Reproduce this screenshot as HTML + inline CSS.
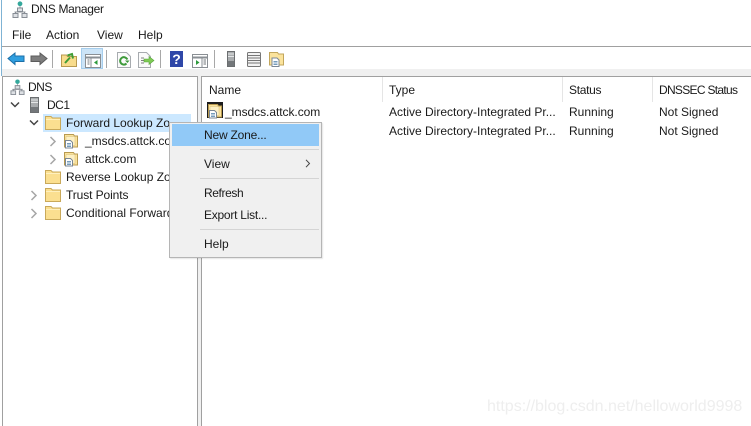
<!DOCTYPE html>
<html><head><meta charset="utf-8">
<style>
html,body{margin:0;padding:0;width:751px;height:426px;overflow:hidden;background:#fff}
body{position:relative;font-family:"Liberation Sans",sans-serif;font-size:12px;color:#1a1a1a}
.a{position:absolute}
.t{position:absolute;white-space:nowrap;line-height:16px;height:16px}
.m{letter-spacing:-.2px}
svg{position:absolute;overflow:visible}
</style></head><body>
<svg width="0" height="0" style="position:absolute">
<defs>
<symbol id="folder" viewBox="0 0 16 15"><path d="M.5 1.500h5.500l1.500 1.500h8v11.500H.5z" fill="#fbdf90" stroke="#c9a95a"/><path d="M1 4.500h14" stroke="#fff0bd"/></symbol>
<symbol id="zone" viewBox="0 0 16 16"><path d="M1.500 1.500h9l1 1.500h3v11h-13z" fill="#fbe39c" stroke="#b89a50"/><path d="M3 3.500h9v9H3z" fill="#fdf0c4" stroke="#d6bd78" stroke-width=".5"/><path d="M2.500 7.500h5l2 2v5.500h-7z" fill="#fff" stroke="#7b8794"/><path d="M4 10.500h4M4 12h4M4 13.500h4" stroke="#4a7ca8" stroke-width=".8"/></symbol>
<symbol id="dns" viewBox="0 0 16 18"><circle cx="8" cy="2.800" r="2.400" fill="#34a89c"/><path d="M8 5.500v5M2.500 11h11" stroke="#8b9097" fill="none"/><path d="M5.500 7h5v3.500h-5zM1 12.500h5v4H1zM10 12.500h5v4h-5z" fill="#dde0e4" stroke="#868c94"/><path d="M3.500 11v1.500M12.500 11v1.500" stroke="#868c94"/></symbol>
</defs></svg>

<div class="a" style="left:1px;top:0;width:1px;height:76px;background:#7fb3d4"></div>

<!-- Title -->
<svg style="left:12px;top:1px" width="16" height="18"><use href="#dns" width="16" height="18"/></svg>
<div class="t" style="left:31px;top:1px;letter-spacing:-.3px">DNS Manager</div>

<!-- Menu -->
<div class="t" style="left:12px;top:27px">File</div>
<div class="t" style="left:46px;top:27px">Action</div>
<div class="t" style="left:97px;top:27px">View</div>
<div class="t" style="left:138px;top:27px">Help</div>
<div class="a" style="left:2px;top:46px;width:749px;height:1px;background:#a0a0a0"></div>

<!-- Toolbar bottom strip -->
<div class="a" style="left:2px;top:69px;width:749px;height:7px;background:#f0f0f0"></div>

<!-- toolbar icons -->
<svg style="left:7px;top:51px" width="18" height="15"><path d="M1 7.500 8 2v3h9v5.500H8V13.500z" fill="#2f9fe0" stroke="#1c6fa8"/></svg>
<svg style="left:30px;top:51px" width="18" height="15"><path d="M17 7.500 10 2v3H1v5.500h9V13.500z" fill="#7d7d7d" stroke="#5c5c5c"/></svg>
<div class="a" style="left:52px;top:50px;width:1px;height:18px;background:#a8a8a8"></div>
<svg style="left:61px;top:52px" width="16" height="15"><path d="M.5 3h5l1 1.500h9v10H.5z" fill="#f8dc8c" stroke="#b89a50"/><path d="M4 11 9 5.500M6.500 3.500 11 2l1 4.500" stroke="#3f9c35" stroke-width="2" fill="none"/></svg>
<div class="a" style="left:81px;top:48px;width:22px;height:21px;background:#cce4f7;box-sizing:border-box;border:1px solid #a5cdec"></div>
<svg style="left:85px;top:54px" width="16" height="14"><rect x=".5" y=".5" width="15" height="13" fill="#fff" stroke="#8a8f94"/><path d="M1 3.500h14" stroke="#8a8f94" stroke-width="2"/><path d="M6 4v9" stroke="#8a8f94"/><path d="M2.500 6h2M2.500 8h2M2.500 10h2" stroke="#6f7478"/><path d="M12.500 6v5L9 8.500z" fill="#2d9a3c"/></svg>
<div class="a" style="left:106px;top:50px;width:1px;height:18px;background:#a8a8a8"></div>
<svg style="left:117px;top:52px" width="14" height="16"><path d="M.5.500h9l4 4v11H.5z" fill="#fbfbfb" stroke="#a7abaf"/><path d="M10.300 7.500A3.700 3.700 0 1 0 9.500 11.500" stroke="#3d9a3a" stroke-width="2" fill="none"/><path d="M8 8.500h4.500L10.500 11z" fill="#3d9a3a"/></svg>
<svg style="left:138px;top:52px" width="17" height="16"><path d="M.5.500h8l4 4v11H.5z" fill="#fbfbfb" stroke="#a7abaf"/><path d="M3 6h3M3 8.500h3M3 11h3" stroke="#7f7f7f"/><path d="M6 7h5V4.500L16 8.500l-5 4V10H6z" fill="#7fcb55" stroke="#58a53c" stroke-width=".6"/></svg>
<div class="a" style="left:160px;top:50px;width:1px;height:18px;background:#a8a8a8"></div>
<div class="a" style="left:170px;top:51px;width:13px;height:16px;background:#2f47a8;color:#fff;font:bold 14px/16px 'Liberation Sans',sans-serif;text-align:center">?</div>
<svg style="left:192px;top:54px" width="16" height="14"><rect x=".5" y=".5" width="15" height="13" fill="#fff" stroke="#8a8f94"/><path d="M1 3.500h14" stroke="#8a8f94" stroke-width="2"/><path d="M10 4v9" stroke="#8a8f94"/><path d="M11.500 6h2.500M11.500 8h2.500M11.500 10h2.500" stroke="#6f7478"/><path d="M4 6v5l3.500-2.500z" fill="#2d9a3c"/></svg>
<div class="a" style="left:214px;top:50px;width:1px;height:18px;background:#a8a8a8"></div>
<svg style="left:227px;top:51px" width="8" height="16"><rect x=".5" y=".5" width="7" height="15" fill="#a9acae" stroke="#6b6e70"/><path d="M1 3h6M1 5.500h6" stroke="#e4e6e7"/><rect x="1" y="10" width="6" height="5" fill="#73777a"/></svg>
<svg style="left:247px;top:52px" width="14" height="15"><rect x=".5" y=".5" width="13" height="14" rx="1" fill="#f2f2f2" stroke="#777"/><path d="M1 3.500h12M1 6h12M1 8.500h12M1 11h12" stroke="#777"/></svg>
<svg style="left:269px;top:51px" width="15" height="16"><path d="M.5 1.500h8l1 1.500h5v11H.5z" fill="#fbe39c" stroke="#c2a65c"/><path d="M3 7h5l2 2v6.500H3z" fill="#fff" stroke="#7b8794"/><path d="M4.500 10.500h4M4.500 12h4M4.500 13.500h4" stroke="#4a7ca8" stroke-width=".8"/></svg>

<!-- Panes -->
<div class="a" style="left:2px;top:76px;width:196px;height:350px;box-sizing:border-box;border:1px solid #a0a0a0;border-bottom:0;background:#fff"></div>
<div class="a" style="left:198px;top:76px;width:3px;height:350px;background:#f0f0f0"></div>
<div class="a" style="left:201px;top:76px;width:550px;height:350px;box-sizing:border-box;border:1px solid #a0a0a0;border-width:1px 0 0 1px;background:#fff"></div>

<!-- Tree -->
<div class="a" style="left:43px;top:114px;width:148px;height:18px;background:#cce8ff"></div>
<svg style="left:10px;top:79px" width="15" height="17"><use href="#dns" width="15" height="17"/></svg>
<div class="t m" style="left:28px;top:79px;letter-spacing:-.5px">DNS</div>
<svg style="left:10px;top:101px" width="10" height="8"><path d="M1 1.500 5 5.500 9 1.500" stroke="#444" stroke-width="1.500" fill="none"/></svg>
<svg style="left:30px;top:97px" width="9" height="16"><rect x=".5" y=".5" width="8" height="15" fill="#a9acae" stroke="#6b6e70"/><path d="M1 3h7M1 5.500h7" stroke="#e4e6e7"/><rect x="1" y="10" width="7" height="5" fill="#73777a"/></svg>
<div class="t" style="left:47px;top:97px;letter-spacing:-.5px">DC1</div>
<svg style="left:29px;top:119px" width="10" height="8"><path d="M1 1.500 5 5.500 9 1.500" stroke="#444" stroke-width="1.500" fill="none"/></svg>
<svg style="left:45px;top:115px" width="16" height="15"><use href="#folder" width="16" height="15"/></svg>
<div class="t" style="left:66px;top:115px">Forward Lookup Zo</div>
<svg style="left:49px;top:136px" width="7" height="11"><path d="M1.500 1 6 5.500 1.500 10" stroke="#a6a6a6" stroke-width="1.500" fill="none"/></svg>
<svg style="left:63px;top:133px" width="16" height="16"><use href="#zone" width="16" height="16"/></svg>
<div class="t" style="left:85px;top:133px">_msdcs.attck.co</div>
<svg style="left:49px;top:154px" width="7" height="11"><path d="M1.500 1 6 5.500 1.500 10" stroke="#a6a6a6" stroke-width="1.500" fill="none"/></svg>
<svg style="left:63px;top:151px" width="16" height="16"><use href="#zone" width="16" height="16"/></svg>
<div class="t" style="left:85px;top:151px">attck.com</div>
<svg style="left:45px;top:169px" width="16" height="15"><use href="#folder" width="16" height="15"/></svg>
<div class="t" style="left:66px;top:169px">Reverse Lookup Zor</div>
<svg style="left:30px;top:190px" width="7" height="11"><path d="M1.500 1 6 5.500 1.500 10" stroke="#a6a6a6" stroke-width="1.500" fill="none"/></svg>
<svg style="left:45px;top:187px" width="16" height="15"><use href="#folder" width="16" height="15"/></svg>
<div class="t" style="left:66px;top:187px;letter-spacing:-.1px">Trust Points</div>
<svg style="left:30px;top:208px" width="7" height="11"><path d="M1.500 1 6 5.500 1.500 10" stroke="#a6a6a6" stroke-width="1.500" fill="none"/></svg>
<svg style="left:45px;top:205px" width="16" height="15"><use href="#folder" width="16" height="15"/></svg>
<div class="t" style="left:66px;top:205px">Conditional Forward</div>

<!-- List header -->
<div class="t" style="left:209px;top:82px">Name</div>
<div class="t" style="left:389px;top:82px">Type</div>
<div class="t" style="left:569px;top:82px;letter-spacing:-.3px">Status</div>
<div class="t" style="left:659px;top:82px;letter-spacing:-.7px">DNSSEC Status</div>
<div class="a" style="left:382px;top:77px;width:1px;height:25px;background:#e5e5e5"></div>
<div class="a" style="left:562px;top:77px;width:1px;height:25px;background:#e5e5e5"></div>
<div class="a" style="left:652px;top:77px;width:1px;height:25px;background:#e5e5e5"></div>

<!-- List rows -->
<div class="a" style="left:207px;top:102px;width:16px;height:16px;background:#1c1c1c"></div>
<svg style="left:207px;top:103px" width="16" height="16"><use href="#zone" width="16" height="16"/></svg>
<div class="t" style="left:225px;top:104px;letter-spacing:-.05px">_msdcs.attck.com</div>
<div class="t" style="left:389px;top:104px">Active Directory-Integrated Pr...</div>
<div class="t" style="left:569px;top:104px">Running</div>
<div class="t" style="left:659px;top:104px">Not Signed</div>
<div class="t" style="left:389px;top:123px">Active Directory-Integrated Pr...</div>
<div class="t" style="left:569px;top:123px">Running</div>
<div class="t" style="left:659px;top:123px">Not Signed</div>

<!-- Context menu -->
<div class="a" style="left:169px;top:122px;width:153px;height:136px;box-sizing:border-box;background:#f0f0f0;border:1px solid #b5b5b5;box-shadow:1px 1px 1px rgba(0,0,0,.1)"></div>
<div class="a" style="left:172px;top:124px;width:147px;height:22px;background:#91c9f7"></div>
<div class="t m" style="left:204px;top:127px">New Zone...</div>
<div class="a" style="left:200px;top:149px;width:119px;height:1px;background:#d4d4d4"></div>
<div class="t" style="left:204px;top:156px">View</div>
<svg style="left:305px;top:159px" width="6" height="9"><path d="M1 .800 4.500 4.500 1 8.200" stroke="#444" stroke-width="1" fill="none"/></svg>
<div class="a" style="left:200px;top:178px;width:119px;height:1px;background:#d4d4d4"></div>
<div class="t" style="left:204px;top:185px;letter-spacing:-.4px">Refresh</div>
<div class="t" style="left:204px;top:207px;letter-spacing:-.25px">Export List...</div>
<div class="a" style="left:200px;top:229px;width:119px;height:1px;background:#d4d4d4"></div>
<div class="t" style="left:204px;top:236px">Help</div>

<!-- Watermark -->
<div class="t" style="left:487px;top:398px;font-size:16px;line-height:18px;height:18px;color:#eeeeee">https://blog.csdn.net/helloworld9998</div>
</body></html>
